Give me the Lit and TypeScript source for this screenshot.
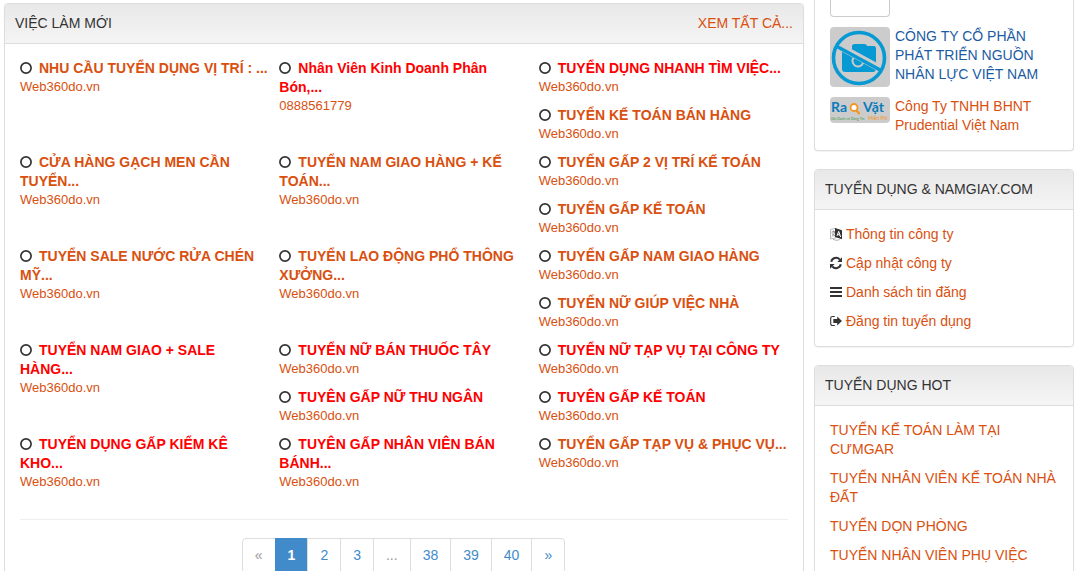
import { LitElement, html, svg, css } from "lit";
import { customElement, property } from "lit/decorators.js";
import { classMap } from "lit/directives/class-map.js";

interface Job {
  title: string;
  by: string;
  hot?: boolean;
}

const WEB = "Web360do.vn";

const JOBS: Job[] = [
  { title: "NHU CẦU TUYỂN DỤNG VỊ TRÍ : ...", by: WEB },
  { title: "Nhân Viên Kinh Doanh Phân Bón,...", by: "0888561779", hot: true },
  { title: "TUYỂN DỤNG NHANH TÌM VIỆC...", by: WEB, hot: true },
  { title: "TUYỂN KẾ TOÁN BÁN HÀNG", by: WEB },
  { title: "CỬA HÀNG GẠCH MEN CẦN TUYỂN...", by: WEB },
  { title: "TUYỂN NAM GIAO HÀNG + KẾ TOÁN...", by: WEB },
  { title: "TUYỂN GẤP 2 VỊ TRÍ KẾ TOÁN", by: WEB },
  { title: "TUYỂN GẤP KẾ TOÁN", by: WEB },
  { title: "TUYỂN SALE NƯỚC RỬA CHÉN MỸ...", by: WEB },
  { title: "TUYỂN LAO ĐỘNG PHỔ THÔNG XƯỞNG...", by: WEB },
  { title: "TUYỂN GẤP NAM GIAO HÀNG", by: WEB },
  { title: "TUYỂN NỮ GIÚP VIỆC NHÀ", by: WEB },
  { title: "TUYỂN NAM GIAO + SALE HÀNG...", by: WEB, hot: true },
  { title: "TUYỂN NỮ BÁN THUỐC TÂY", by: WEB, hot: true },
  { title: "TUYỂN NỮ TẠP VỤ TẠI CÔNG TY", by: WEB, hot: true },
  { title: "TUYÊN GẤP NỮ THU NGÂN", by: WEB, hot: true },
  { title: "TUYÊN GẤP KẾ TOÁN", by: WEB, hot: true },
  { title: "TUYỂN DỤNG GẤP KIỂM KÊ KHO...", by: WEB, hot: true },
  { title: "TUYÊN GẤP NHÂN VIÊN BÁN BÁNH...", by: WEB, hot: true },
  { title: "TUYỂN GẤP TẠP VỤ & PHỤC VỤ...", by: WEB },
];

const HOT_LIST = [
  "TUYỂN KẾ TOÁN LÀM TẠI CƯMGAR",
  "TUYỂN NHÂN VIÊN KẾ TOÁN NHÀ ĐẤT",
  "TUYỂN DỌN PHÒNG",
  "TUYỂN NHÂN VIÊN PHỤ VIỆC",
];

const PAGES = ["«", "1", "2", "3", "...", "38", "39", "40", "»"];

const ICONS = {
  language: svg`
    <path d="M.5 2.500L6 1.200V10.800L.5 12z" fill="#fff" stroke="#aaa" stroke-width=".8"/>
    <path d="M1.500 5.200L5 4.600M3.200 3.600V5M4.600 4.800C4.200 7 3.200 8.600 1.600 9.600M2.200 6.400C2.800 7.600 3.800 8.600 5 9" fill="none" stroke="#777" stroke-width=".8"/>
    <path d="M5 1L12.200 3.200V12.400L5 10z" fill="#333"/>
    <path d="M7 8.900L8.700 4.300L10.700 10M7.600 7.400L10 8.200" fill="none" stroke="#fff" stroke-width="1"/>
    <path d="M3 12.200C5.400 13.500 7.600 13.500 9.600 12.600" fill="none" stroke="#999" stroke-width=".8"/>`,
  refresh: svg`
    <path d="M1.200 5.700A4.900 4.900 0 0 1 9.800 3.700M10.800 8.300A4.900 4.900 0 0 1 2.200 10.300" fill="none" stroke="#333" stroke-width="2"/>
    <path d="M12 1.200V5.900H7.300zM0 12.800V8.100H4.700z" fill="#333"/>`,
  bars: svg`<path d="M0 2h12v2H0zM0 6h12v2H0zM0 10h12v2H0z" fill="#333"/>`,
  signOut: svg`
    <path d="M4.800 2.500H2.400A1.700 1.700 0 0 0 .7 4.200V9.800A1.700 1.700 0 0 0 2.400 11.500H4.800" fill="none" stroke="#333" stroke-width="1.1"/>
    <path d="M7.200 2.400L12 7L7.200 11.600V9.100H3.300V4.900H7.200z" fill="#333"/>`,
};

const MENU = [
  { icon: ICONS.language, label: "Thông tin công ty" },
  { icon: ICONS.refresh, label: "Cập nhật công ty" },
  { icon: ICONS.bars, label: "Danh sách tin đăng" },
  { icon: ICONS.signOut, label: "Đăng tin tuyển dụng" },
];

const base = css`
  * {
    box-sizing: border-box;
  }
  a {
    color: #d9500f;
    text-decoration: none;
  }
  ul {
    list-style: none;
    margin: 0;
    padding: 0;
  }
`;

@customElement("side-panel")
export class SidePanel extends LitElement {
  @property() heading = "";

  static styles = [
    base,
    css`
      :host {
        display: block;
        background: #fff;
        border: 1px solid #ddd;
        border-radius: 4px;
        box-shadow: 0 1px 1px rgba(0, 0, 0, 0.05);
      }
      .head {
        display: flex;
        justify-content: space-between;
        padding: 10px;
        border-bottom: 1px solid #ddd;
        border-radius: 3px 3px 0 0;
        background: linear-gradient(#e8e8e8, #f5f5f5);
      }
      .title {
        margin: 0;
        font-size: 14px;
        font-weight: 400;
      }
      .body {
        padding: 15px;
      }
    `,
  ];

  render() {
    return html`
      ${this.heading
        ? html`<header class="head">
            <h2 class="title">${this.heading}</h2>
            <slot name="action"></slot>
          </header>`
        : null}
      <div class="body"><slot></slot></div>
    `;
  }
}

@customElement("app-root")
export class AppRoot extends LitElement {
  static styles = [
    base,
    css`
      :host {
        display: block;
        height: 100vh;
        overflow: hidden;
        background: #fff;
        color: #333;
        font: 14px/19px "Liberation Sans", Arial, sans-serif;
      }
      .page {
        display: grid;
        grid-template-columns: minmax(0, 1fr) 260px;
        align-items: start;
        gap: 10px;
        padding: 0 7px 0 4px;
      }
      .main {
        padding-top: 3px;
      }
      .jobs {
        display: flow-root;
        margin-right: -10px;
      }
      /* Floated so that short entries stack beside taller neighbours. */
      .job {
        float: left;
        width: 33.333%;
        padding: 0 10px 10px 0;
      }
      .ring {
        width: 12px;
        height: 12px;
        margin-right: 7px;
        vertical-align: -1px;
      }
      .name {
        font-weight: 700;
      }
      .hot {
        color: #f00;
      }
      .by {
        display: block;
        font-size: 13px;
        line-height: 18px;
      }
      .rule {
        margin: 18px 0;
        border: 0;
        border-top: 1px solid #eee;
      }
      .pages {
        display: flex;
        justify-content: center;
        margin-bottom: 20px;
      }
      .page-link {
        display: block;
        margin-left: -1px;
        padding: 7px 12px;
        border: 1px solid #ddd;
        color: #428bca;
      }
      .page-item:first-child .page-link {
        border-radius: 4px 0 0 4px;
      }
      .page-item:last-child .page-link {
        border-radius: 0 4px 4px 0;
      }
      .muted {
        color: #999;
      }
      .current {
        border-color: #428bca;
        background: #428bca;
        color: #fff;
        font-weight: 700;
      }
      .side {
        display: grid;
        gap: 18px;
      }
      .cut {
        border-top: 0;
        border-radius: 0 0 4px 4px;
        margin-top: -15px;
      }
      .stack {
        display: grid;
        gap: 10px;
      }
      .company {
        display: flex;
        align-items: flex-start;
        gap: 5px;
      }
      .blank {
        width: 60px;
        height: 17px;
        border: 1px solid #ccc;
        border-top: 0;
        border-radius: 0 0 4px 4px;
      }
      .pic {
        flex: none;
        width: 60px;
        border-radius: 4px;
        background: #ccc;
      }
      .visited {
        color: #1b5ca3;
      }
      .entry {
        display: flex;
        align-items: center;
        gap: 4px;
      }
      .glyph {
        width: 12px;
        height: 14px;
        margin-bottom: 1px;
      }
      .brand {
        font: 700 28px/28px Lato, sans-serif;
        fill: #0a7abf;
      }
      .tag {
        font: 7px/7px Lato, sans-serif;
        fill: #3c9a4a;
      }
      .free {
        font: 10px/10px Lato, sans-serif;
        fill: #f7941d;
      }
    `,
  ];

  private job(job: Job) {
    return html`<li class="job">
      <svg class="ring" viewBox="0 0 12 12" aria-hidden="true">
        <circle cx="6" cy="6" r="5.1" fill="none" stroke="#333" stroke-width="1.700" /></svg
      ><a href="#" class=${classMap({ name: true, hot: !!job.hot })}>${job.title}</a>
      <a href="#" class="by">${job.by}</a>
    </li>`;
  }

  private pageLink(label: string) {
    const current = label === "1";
    const muted = label === "«" || label === "...";
    const classes = classMap({ "page-link": true, current, muted });
    return html`<li class="page-item">
      ${current || muted
        ? html`<span class=${classes}>${label}</span>`
        : html`<a href="#" class=${classes}>${label}</a>`}
    </li>`;
  }

  render() {
    return html`
      <div class="page">
        <main class="main">
          <side-panel heading="VIỆC LÀM MỚI">
            <a slot="action" href="#">XEM TẤT CẢ...</a>
            <ul class="jobs">
              ${JOBS.map((j) => this.job(j))}
            </ul>
            <hr class="rule" />
            <nav aria-label="Trang">
              <ul class="pages">
                ${PAGES.map((p) => this.pageLink(p))}
              </ul>
            </nav>
          </side-panel>
        </main>
        <aside class="side">
          <side-panel class="cut">
            <ul class="stack">
              <li><div class="blank"></div></li>
              <li class="company">
                <svg class="pic" viewBox="0 0 60 60" aria-hidden="true">
                  <path d="M12 25q0-3 3-3h7v-3q0-2 3-2h9q3 0 3 2h7q2 0 2 3v19q0 4-3 4H15q-3 0-3-3z" fill="#0799d3" />
                  <circle cx="28" cy="34" r="5.500" fill="none" stroke="#ccc" stroke-width="2" />
                  <path d="M6 17.500L51 42" stroke="#ccc" stroke-width="7" />
                  <path d="M7 19.500L52 44" stroke="#0799d3" stroke-width="3.600" />
                  <circle cx="29" cy="31" r="25.500" fill="none" stroke="#0799d3" stroke-width="3.600" />
                </svg>
                <a href="#" class="visited">CÔNG TY CỔ PHẦN PHÁT TRIỂN NGUỒN NHÂN LỰC VIỆT NAM</a>
              </li>
              <li class="company">
                <svg class="pic" viewBox="0 0 120 52" aria-hidden="true">
                  <text class="brand" x="2" y="29">Ra</text>
                  <text class="brand" x="66" y="29">Vặt</text>
                  <circle cx="48" cy="21" r="7" fill="#fff" stroke="#f7941d" stroke-width="3.600" />
                  <path d="M53 27L59 34" stroke="#f7941d" stroke-width="4.400" />
                  <text class="tag" x="2" y="46">Ghi Danh và Đăng Tin</text>
                  <text class="free" x="76" y="46">Miễn Phí</text>
                </svg>
                <a href="#">Công Ty TNHH BHNT Prudential Việt Nam</a>
              </li>
            </ul>
          </side-panel>
          <side-panel heading="TUYỂN DỤNG &amp; NAMGIAY.COM">
            <ul class="stack">
              ${MENU.map(
                (m) => html`<li class="entry">
                  <svg class="glyph" viewBox="0 0 12 14" aria-hidden="true">${m.icon}</svg>
                  <a href="#">${m.label}</a>
                </li>`
              )}
            </ul>
          </side-panel>
          <side-panel heading="TUYỂN DỤNG HOT">
            <ul class="stack">
              ${HOT_LIST.map((t) => html`<li><a href="#">${t}</a></li>`)}
            </ul>
          </side-panel>
        </aside>
      </div>
    `;
  }
}
